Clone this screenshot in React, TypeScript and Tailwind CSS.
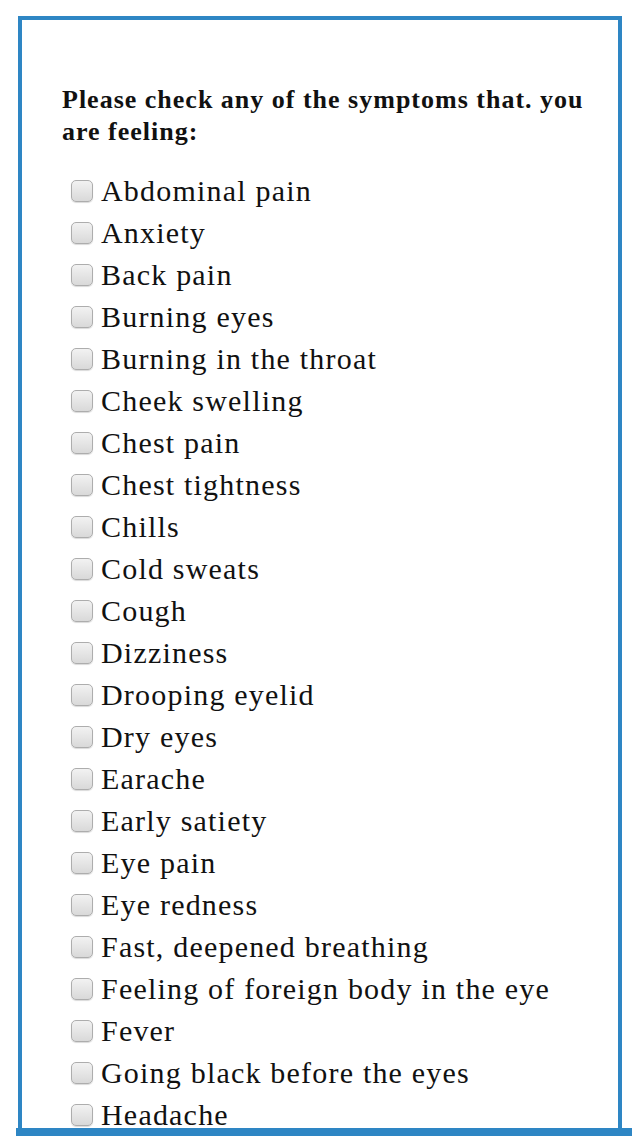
const symptoms = [
  "Abdominal pain",
  "Anxiety",
  "Back pain",
  "Burning eyes",
  "Burning in the throat",
  "Cheek swelling",
  "Chest pain",
  "Chest tightness",
  "Chills",
  "Cold sweats",
  "Cough",
  "Dizziness",
  "Drooping eyelid",
  "Dry eyes",
  "Earache",
  "Early satiety",
  "Eye pain",
  "Eye redness",
  "Fast, deepened breathing",
  "Feeling of foreign body in the eye",
  "Fever",
  "Going black before the eyes",
  "Headache",
];

export default function App() {
  return (
    <div className="h-[1136px] w-[640px] overflow-hidden bg-white pt-4 font-['Liberation_Serif',serif] text-[#111]">
      {/* BOX */}
      <div className="ml-[18px] h-[1112px] w-[604px] overflow-hidden border-x-4 border-t-4 border-[#2e86c4] pl-10 pt-16">
        <h2 className="w-[556px] text-[26px] font-bold leading-8 tracking-[1px]">
          Please check any of the symptoms that. you are feeling:
        </h2>

        <ul className="mt-[22px]">
          {symptoms.map((s, i) => (
            <li key={i}>
              <label className="flex h-[42px] items-center gap-2 pl-[9px]">
                <input
                  type="checkbox"
                  className="h-[22px] w-[22px] shrink-0 appearance-none rounded-[5px] border border-[#adadad] bg-linear-to-b from-[#f2f2f2] to-[#d9d9d9] shadow-[0_1px_1px_rgba(0,0,0,0.15)]"
                />
                <span className="text-[30px] leading-none tracking-[1.2px]">
                  {s}
                </span>
              </label>
            </li>
          ))}
        </ul>
      </div>

      {/* BOTTOM BAR */}
      <div className="ml-4 h-2 w-[616px] bg-[#2e86c4]" />
    </div>
  );
}
